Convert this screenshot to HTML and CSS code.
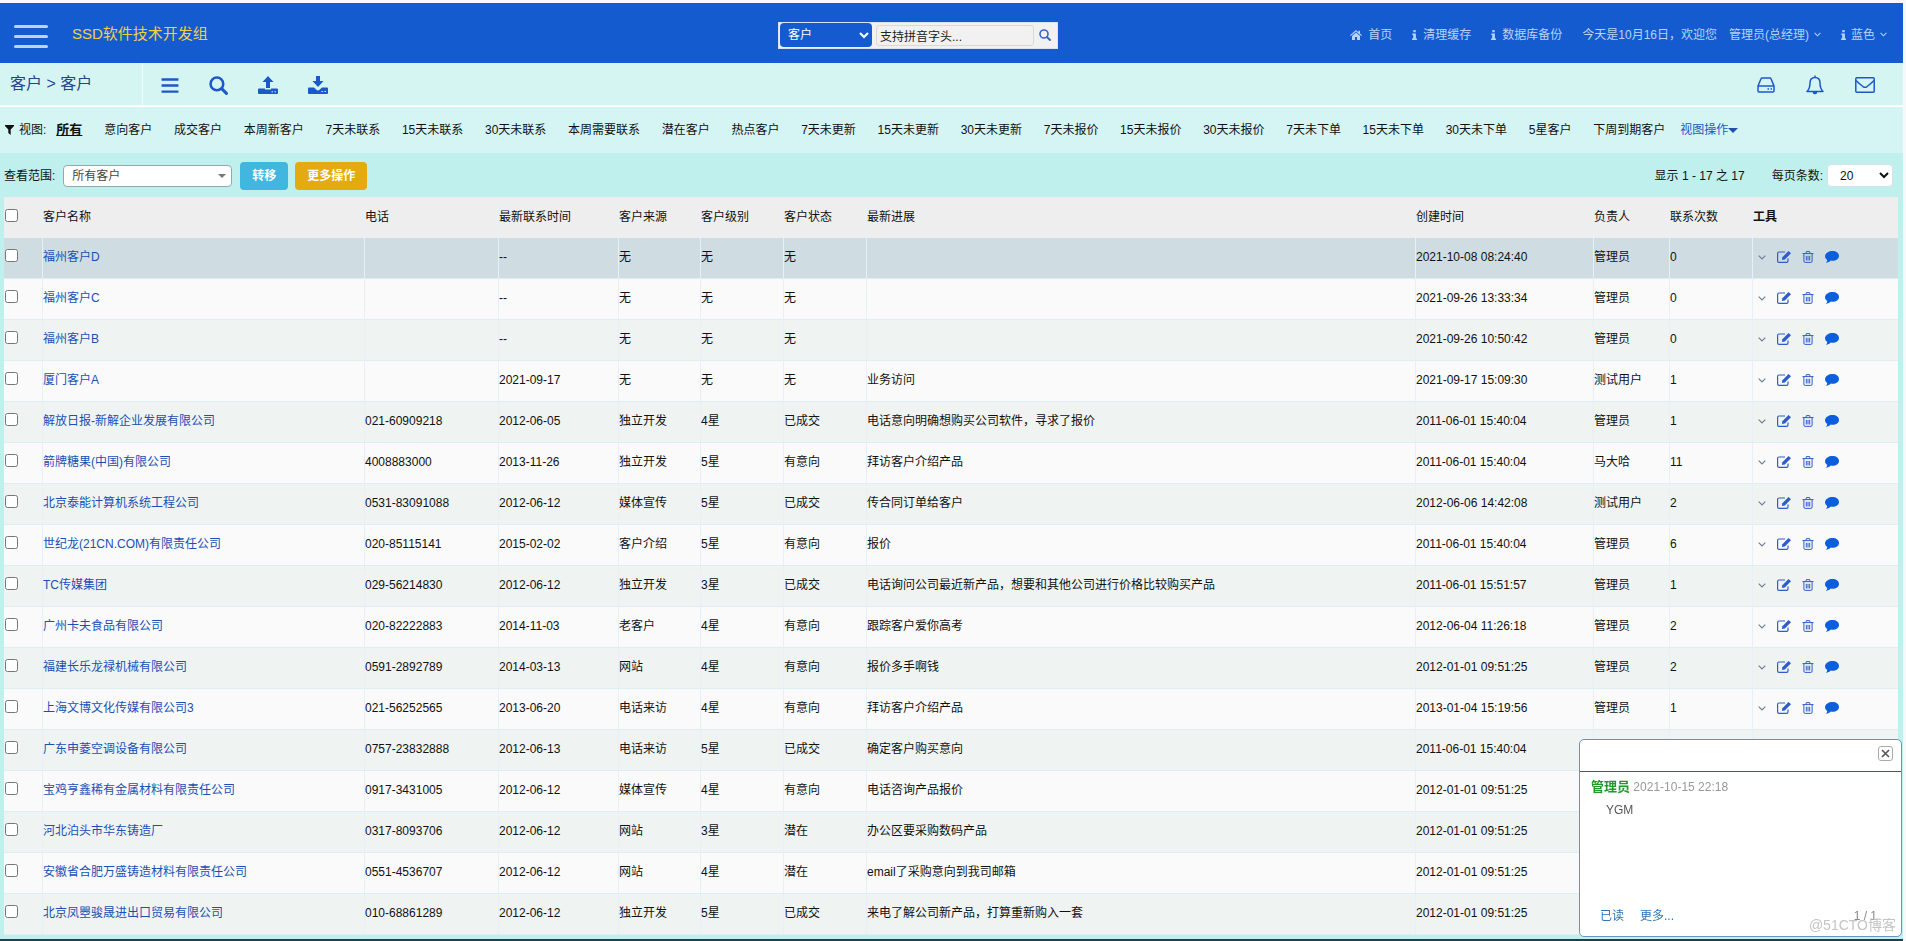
FILE: index.html
```html
<!DOCTYPE html>
<html lang="zh-CN">
<head>
<meta charset="utf-8">
<title>SSD软件技术开发组</title>
<link rel="stylesheet" href="styles.css">
</head>
<body>
<svg class="sprite" aria-hidden="true">
  <symbol id="i-menu" viewBox="0 0 18 16"><path d="M0 1.500h18M0 8h18M0 14.500h18" stroke="currentColor" stroke-width="2.600"/></symbol>
  <symbol id="i-search" viewBox="0 0 18 18"><circle cx="7.500" cy="7.500" r="6" fill="none" stroke="currentColor" stroke-width="2.400"/><path d="M12 12l4.500 4.500" stroke="currentColor" stroke-width="2.800" stroke-linecap="round"/></symbol>
  <symbol id="i-upload" viewBox="0 0 20 18"><path fill="currentColor" d="M10 0l5.500 6H12v6H8V6H4.500zM1 12.500h6v1h6v-1h6q1 0 1 1V17q0 1-1 1H1q-1 0-1-1v-3.500q0-1 1-1z"/><path d="M13.500 15.800H15M16.500 15.800H18" stroke="#d5f5f4"/></symbol>
  <symbol id="i-download" viewBox="0 0 20 18"><path fill="currentColor" d="M8 0h4v5h3.500L10 11 4.500 5H8zM1 11.500h5l2.500 2.300q1.500 1.200 3 0l2.500-2.300h5q1 0 1 1V17q0 1-1 1H1q-1 0-1-1v-4.500q0-1 1-1z"/><path d="M13.500 15.500H15M16.500 15.500H18" stroke="#d5f5f4"/></symbol>
  <symbol id="i-disk" viewBox="0 0 18 16"><path d="M1 9l3-7.200q.3-.8 1-.8h8q.7 0 1 .8L17 9v5q0 1-1 1H2q-1 0-1-1zM1 9h16M10.500 12H12M13.500 12H15" fill="none" stroke="currentColor" stroke-width="1.500"/></symbol>
  <symbol id="i-bell" viewBox="0 0 18 20"><path d="M9 2.500c-3.500 0-5 2.500-5 5.500 0 5-1 6.500-3 8.500h16c-2-2-3-3.500-3-8.500 0-3-1.500-5.500-5-5.500zM9 .5v2" fill="none" stroke="currentColor" stroke-width="1.500" stroke-linejoin="round"/><path d="M6.700 16.700a2.300 2.600 0 0 0 4.600 0z" fill="currentColor"/></symbol>
  <symbol id="i-mail" viewBox="0 0 20 16"><rect x=".8" y=".8" width="18.400" height="14.400" rx="1" fill="none" stroke="currentColor" stroke-width="1.500"/><path d="M1 3.500C4 6.500 6 8 8 9.600q2 1.400 4 0C14 8 16 6.500 19 3.500" fill="none" stroke="currentColor" stroke-width="1.500"/></symbol>
  <symbol id="i-home" viewBox="0 0 12 10"><path fill="currentColor" d="M6 0l2.500 2.200V.8H10v2.700L12 5.300l-.7.7L6 1.500.7 6 0 5.300zM6 2.500l4 3.400V10H7V7H5v3H2V5.900z"/></symbol>
  <symbol id="i-info" viewBox="0 0 5 10"><path fill="currentColor" d="M1.300 0h2.400v2.200H1.300zM.3 3.500h3.600v5H5V10H0V8.500h1.200V5H.3z"/></symbol>
  <symbol id="i-down" viewBox="0 0 8 5"><path d="M.7.700L4 4 7.300.7" fill="none" stroke="currentColor" stroke-width="1.200"/></symbol>
  <symbol id="i-filter" viewBox="0 0 9 10"><path fill="currentColor" d="M0 0h9v1L5.700 4.500V10L3.300 8V4.500L0 1z"/></symbol>
  <symbol id="i-edit" viewBox="0 0 14 12"><path d="M11 7.500V10q0 1.400-1.400 1.400H2Q.6 11.400.6 10V2.500Q.6 1 2 1h6" fill="none" stroke="currentColor" stroke-width="1.200"/><path fill="currentColor" d="M11.500 0L14 2.300 7.800 8.500l-2.900.6.500-2.900z"/></symbol>
  <symbol id="i-trash" viewBox="0 0 12 12"><path d="M.5 2.600h11M3.800 2.600L4.400.6h3.200l.6 2M1.900 2.600V10q0 1.400 1.200 1.400h5.800q1.200 0 1.200-1.400V2.600M4.300 4.800v4.700M6 4.800v4.700M7.700 4.800v4.700" fill="none" stroke="currentColor"/></symbol>
  <symbol id="i-chat" viewBox="0 0 14 12"><path fill="currentColor" d="M7.500 0C11.200 0 14 2.100 14 4.900s-2.800 4.900-6.500 4.900q-1 0-1.800-.2C4.500 11 3 11.700.8 12c1-.9 1.400-1.800 1.400-3.200C.8 7.900 0 6.500 0 4.900.5 2.100 3.800 0 7.500 0z"/></symbol>
</svg>

<header class="topbar">
  <button class="burger" aria-label="菜单"><span></span><span></span><span></span></button>
  <h1 class="brand">SSD软件技术开发组</h1>
  <form class="search">
    <select class="search-type" aria-label="类型"><option>客户</option></select>
    <input class="search-text" type="text" value="支持拼音字头..." aria-label="搜索">
    <button class="search-go" type="button" aria-label="搜索"><svg width="12" height="12"><use href="#i-search"/></svg></button>
  </form>
  <nav class="topnav">
    <a href="#"><svg width="12" height="10"><use href="#i-home"/></svg>首页</a>
    <a href="#"><svg width="5" height="10"><use href="#i-info"/></svg>清理缓存</a>
    <a href="#"><svg width="5" height="10"><use href="#i-info"/></svg>数据库备份</a>
    <span class="welcome">今天是10月16日，欢迎您</span>
    <a class="user" href="#">管理员(总经理)<svg width="7" height="5"><use href="#i-down"/></svg></a>
    <a class="theme" href="#"><svg width="5" height="10"><use href="#i-info"/></svg>蓝色<svg width="7" height="5"><use href="#i-down"/></svg></a>
  </nav>
</header>

<div class="navbar">
  <div class="crumb">客户 &gt; 客户</div>
  <div class="actions">
    <button aria-label="列表"><svg width="18" height="15"><use href="#i-menu"/></svg></button>
    <button aria-label="查找"><svg width="19" height="19"><use href="#i-search"/></svg></button>
    <button aria-label="导入"><svg width="20" height="18"><use href="#i-upload"/></svg></button>
    <button aria-label="导出"><svg width="20" height="18"><use href="#i-download"/></svg></button>
  </div>
  <div class="alerts">
    <button aria-label="存储"><svg width="18" height="16"><use href="#i-disk"/></svg></button>
    <button aria-label="通知"><svg width="18" height="20"><use href="#i-bell"/></svg></button>
    <button aria-label="邮件"><svg width="20" height="16"><use href="#i-mail"/></svg></button>
  </div>
</div>

<div class="views">
  <svg width="9" height="10"><use href="#i-filter"/></svg>
  <span class="views-label">视图:</span>
  <a class="current" href="#">所有</a>
  <nav class="view-list">
    <a href="#">意向客户</a><a href="#">成交客户</a><a href="#">本周新客户</a><a href="#">7天未联系</a><a href="#">15天未联系</a><a href="#">30天未联系</a><a href="#">本周需要联系</a><a href="#">潜在客户</a><a href="#">热点客户</a><a href="#">7天未更新</a><a href="#">15天未更新</a><a href="#">30天未更新</a><a href="#">7天未报价</a><a href="#">15天未报价</a><a href="#">30天未报价</a><a href="#">7天未下单</a><a href="#">15天未下单</a><a href="#">30天未下单</a><a href="#">5星客户</a><a href="#">下周到期客户</a>
  </nav>
  <a class="view-ops" href="#">视图操作<span class="caret"></span></a>
</div>

<main class="panel">
  <div class="toolbar">
    <label for="scope">查看范围:</label>
    <span class="scope-wrap"><select id="scope" class="scope"><option>所有客户</option></select></span>
    <button class="btn move">转移</button>
    <button class="btn more">更多操作</button>
    <span class="count">显示 1 - 17 之 17</span>
    <label for="size">每页条数:</label>
    <select id="size" class="size"><option>20</option></select>
  </div>
  <table class="grid">
    <colgroup><col class="c-check"><col class="c-name"><col class="c-tel"><col class="c-time"><col class="c-source"><col class="c-level"><col class="c-state"><col><col class="c-created"><col class="c-owner"><col class="c-count"><col class="c-tools"></colgroup>
    <thead>
      <tr><th><input type="checkbox" aria-label="全选"></th><th>客户名称</th><th>电话</th><th>最新联系时间</th><th>客户来源</th><th>客户级别</th><th>客户状态</th><th>最新进展</th><th>创建时间</th><th>负责人</th><th>联系次数</th><th class="strong">工具</th></tr>
    </thead>
    <tbody id="rows"></tbody>
  </table>
</main>

<aside class="popup">
  <div class="popup-head"><button class="close" aria-label="关闭"><svg width="9" height="9" viewBox="0 0 9 9"><path d="M1 1l7 7M8 1L1 8" stroke="#555" stroke-width="1.600"/></svg></button></div>
  <div class="popup-body">
    <p class="from"><b>管理员</b> <time>2021-10-15 22:18</time></p>
    <p class="msg">YGM</p>
  </div>
  <div class="popup-foot"><a href="#">已读</a><a href="#">更多...</a><span class="page">1 / 1</span></div>
</aside>
<div class="watermark">@51CTO博客</div>
<script src="rows.js"></script>
</body>
</html>
```
FILE: styles.css
```css
* { box-sizing: border-box; }
body {
  margin: 0;
  padding: 3px 3px 0 0;
  min-height: 100vh;
  display: flex;
  flex-direction: column;
  overflow: hidden;
  background: #f7f8fa;
  color: #111;
  font: 12px/18px "Liberation Sans", "Noto Sans CJK SC", sans-serif;
}
a { color: inherit; text-decoration: none; }
button { border: 0; padding: 0; background: none; color: inherit; font: inherit; cursor: pointer; }
button, a { flex: none; }
svg { display: block; flex: none; }
select, input { font: inherit; margin: 0; }
.sprite { position: absolute; width: 0; height: 0; }

.topbar {
  height: 60px;
  display: grid;
  grid-template-columns: 1fr auto 1fr;
  grid-template-areas: "left search right";
  align-items: center;
  background: #155bd0;
}
.burger { grid-area: left; margin: 6px 0 0 14px; width: 34px; display: flex; flex-direction: column; gap: 7px; }
.burger span { width: 34px; height: 3px; border-radius: 2px; background: #c5cfe6; }
.brand { grid-area: left; margin: 2px 0 0 72px; justify-self: start; color: #f5cf45; font-size: 15px; line-height: 20px; font-weight: 400; }
.search {
  grid-area: search;
  display: flex;
  align-items: center;
  width: 280px;
  height: 27px;
  margin: 4px 0 0 -67px;
  padding: 0 6px 0 1px;
  background: #f1f1f1;
  border: 1px solid #d7e2f5;
}
.search-type { width: 92px; height: 24px; padding: 0 4px; border: 0; border-radius: 4px; background: #155bd0; color: #fff; }
.search-text { flex: 1; min-width: 0; height: 21px; margin: 0 5px 0 4px; padding: 0 3px; border: 1px solid #ddd8cf; border-radius: 3px; background: #f1f1f1; color: #222; }
.search-go { color: #3a62c4; }
.topnav { grid-area: right; justify-self: end; display: flex; align-items: center; gap: 20px; padding: 3px 16px 0 0; color: #b9d2f4; white-space: nowrap; }
.topnav a { display: flex; align-items: center; gap: 6px; }
.topnav .user { margin-left: -8px; gap: 5px; }
.topnav .theme { gap: 5px; }

.navbar { height: 44px; display: flex; align-items: center; background: #d5f5f3; border-bottom: 2px solid #fff; color: #1d58c8; }
.crumb { width: 143px; align-self: stretch; padding: 11px 0 0 10px; border-right: 1px solid #eefbfb; color: #25448c; font-size: 16px; line-height: 20px; }
.actions { display: flex; align-items: center; gap: 30px; padding: 2px 0 0 18px; }
.alerts { display: flex; align-items: center; gap: 31px; margin-left: auto; padding: 2px 28px 0 0; }

.views { height: 46px; display: flex; align-items: center; padding-left: 5px; background: #d5f5f4; white-space: nowrap; }
.views-label { margin-left: 5px; }
.current { margin-left: 10px; font-size: 13px; font-weight: 700; text-decoration: underline; }
.view-list { flex: 0 1 1561px; margin-left: 22px; display: flex; justify-content: space-between; }
.view-ops { margin-left: 15px; display: flex; align-items: center; color: #1d58c8; }
.caret { border: 5px solid transparent; border-top-color: #1f4fa8; border-bottom: 0; }

.panel { flex: 1; padding: 0 5px 4px 4px; background: #c0f0ed; border-bottom: 2px solid #1e3f4f; }
.toolbar { height: 44px; padding-top: 1px; display: flex; align-items: center; white-space: nowrap; }
.scope-wrap { position: relative; margin: 0 8px 0 8px; }
.scope-wrap::after { content: ""; position: absolute; right: 6px; top: 9px; border: 4px solid transparent; border-top-color: #777; border-bottom: 0; pointer-events: none; }
.scope { display: block; width: 169px; height: 22px; padding: 0 8px; border: 1px solid #8fa9b3; border-radius: 4px; background: #fff; color: #444; appearance: none; }
.btn { height: 28px; padding: 0 12px; border-radius: 4px; color: #fff; font-weight: 700; }
.move { background: #41b7df; }
.more { margin-left: 7px; background: #e3ab10; }
.count { margin: 0 27px 0 auto; }
.size { width: 66px; height: 23px; margin: 0 5px 0 4px; padding: 0 8px; border: 1px solid #d5e2e8; border-radius: 4px; background: #fff; color: #111; }

.grid { width: 100%; table-layout: fixed; border-collapse: separate; border-spacing: 0; white-space: nowrap; }
.grid th { background: #eeeeee; font-weight: 400; text-align: left; }
.grid .strong { font-weight: 700; }
.grid th, .grid td { height: 41px; padding: 0 0 2px; border-left: 1px solid #e6effa; }
.grid td { border-bottom: 1px solid #dfeeee; }
.grid th:first-child, .grid td:first-child { border-left: 0; }
.grid tbody tr { background: #fafafa; }
.grid tbody tr:nth-child(odd) { background: #eff4f3; }
.grid tbody tr:first-child { background: #cfdde3; }
.grid input { display: block; width: 13px; height: 13px; margin: 0 0 3px 1px; }
.grid td a { color: #1a4fb5; }
.c-check { width: 38px; }
.c-name { width: 322px; }
.c-tel { width: 134px; }
.c-time { width: 120px; }
.c-source { width: 82px; }
.c-level { width: 83px; }
.c-state { width: 83px; }
.c-created { width: 178px; }
.c-owner { width: 76px; }
.c-count { width: 83px; }
.c-tools { width: 146px; }
.tools { display: flex; align-items: center; gap: 11px; padding-left: 5px; color: #2f5cc8; }
.tools .drop { color: #6f7f90; }
.tools .chat { color: #0c5fdc; }

.popup {
  position: fixed;
  right: 4px;
  bottom: 4px;
  width: 323px;
  height: 198px;
  display: flex;
  flex-direction: column;
  background: #fff;
  border: 1px solid #6d90bd;
  border-radius: 5px;
  color: #555;
}
.popup-head { height: 32px; padding: 6px 8px; display: flex; justify-content: flex-end; border-bottom: 1px solid #4c5560; }
.close { width: 15px; height: 15px; display: grid; place-items: center; border: 1px solid #aaa; border-radius: 3px; }
.popup-body { flex: 1; padding: 6px 11px; }
.popup p { margin: 0; }
.popup b { color: #1f9a24; font-size: 13px; }
.popup time { color: #999; }
.popup .msg { padding: 5px 0 0 15px; }
.popup-foot { display: flex; gap: 16px; padding: 0 24px 11px 20px; color: #2f72b8; }
.page { margin-left: auto; color: #888; }
.watermark { position: fixed; right: 10px; bottom: 6px; color: #c4c4c4; font-size: 14px; line-height: 20px; }
```
FILE: rows.js
```js
const rows = [
  ["福州客户D", "", "--", "无", "无", "无", "", "2021-10-08 08:24:40", "管理员", 0],
  ["福州客户C", "", "--", "无", "无", "无", "", "2021-09-26 13:33:34", "管理员", 0],
  ["福州客户B", "", "--", "无", "无", "无", "", "2021-09-26 10:50:42", "管理员", 0],
  ["厦门客户A", "", "2021-09-17", "无", "无", "无", "业务访问", "2021-09-17 15:09:30", "测试用户", 1],
  ["解放日报-新解企业发展有限公司", "021-60909218", "2012-06-05", "独立开发", "4星", "已成交", "电话意向明确想购买公司软件，寻求了报价", "2011-06-01 15:40:04", "管理员", 1],
  ["箭牌糖果(中国)有限公司", "4008883000", "2013-11-26", "独立开发", "5星", "有意向", "拜访客户介绍产品", "2011-06-01 15:40:04", "马大哈", 11],
  ["北京泰能计算机系统工程公司", "0531-83091088", "2012-06-12", "媒体宣传", "5星", "已成交", "传合同订单给客户", "2012-06-06 14:42:08", "测试用户", 2],
  ["世纪龙(21CN.COM)有限责任公司", "020-85115141", "2015-02-02", "客户介绍", "5星", "有意向", "报价", "2011-06-01 15:40:04", "管理员", 6],
  ["TC传媒集团", "029-56214830", "2012-06-12", "独立开发", "3星", "已成交", "电话询问公司最近新产品，想要和其他公司进行价格比较购买产品", "2011-06-01 15:51:57", "管理员", 1],
  ["广州卡夫食品有限公司", "020-82222883", "2014-11-03", "老客户", "4星", "有意向", "跟踪客户爱你高考", "2012-06-04 11:26:18", "管理员", 2],
  ["福建长乐龙禄机械有限公司", "0591-2892789", "2014-03-13", "网站", "4星", "有意向", "报价多手啊钱", "2012-01-01 09:51:25", "管理员", 2],
  ["上海文博文化传媒有限公司3", "021-56252565", "2013-06-20", "电话来访", "4星", "有意向", "拜访客户介绍产品", "2013-01-04 15:19:56", "管理员", 1],
  ["广东申菱空调设备有限公司", "0757-23832888", "2012-06-13", "电话来访", "5星", "已成交", "确定客户购买意向", "2011-06-01 15:40:04", "", ""],
  ["宝鸡亨鑫稀有金属材料有限责任公司", "0917-3431005", "2012-06-12", "媒体宣传", "4星", "有意向", "电话咨询产品报价", "2012-01-01 09:51:25", "", ""],
  ["河北泊头市华东铸造厂", "0317-8093706", "2012-06-12", "网站", "3星", "潜在", "办公区要采购数码产品", "2012-01-01 09:51:25", "", ""],
  ["安徽省合肥万盛铸造材料有限责任公司", "0551-4536707", "2012-06-12", "网站", "4星", "潜在", "email了采购意向到我司邮箱", "2012-01-01 09:51:25", "", ""],
  ["北京凤瞾骏晟进出口贸易有限公司", "010-68861289", "2012-06-12", "独立开发", "5星", "已成交", "来电了解公司新产品，打算重新购入一套", "2012-01-01 09:51:25", "", ""]
];
const icon = (name, w, h) => `<svg width="${w}" height="${h}"><use href="#i-${name}"/></svg>`;
const tools = `<div class="tools"><button class="drop" aria-label="展开">${icon("down", 8, 5)}</button><button aria-label="编辑">${icon("edit", 14, 12)}</button><button aria-label="删除">${icon("trash", 12, 12)}</button><button class="chat" aria-label="联系">${icon("chat", 14, 12)}</button></div>`;
document.getElementById("rows").innerHTML = rows.map(([name, ...rest]) =>
  `<tr><td><input type="checkbox" aria-label="${name}"></td><td><a href="#">${name}</a></td>${rest.map(v => `<td>${v}</td>`).join("")}<td>${tools}</td></tr>`
).join("");
```
